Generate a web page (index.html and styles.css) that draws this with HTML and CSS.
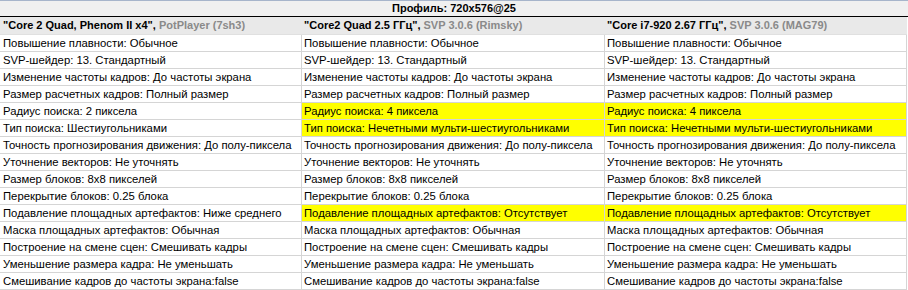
FILE: index.html
```html
<!DOCTYPE html>
<html lang="ru">
<head>
<meta charset="utf-8">
<title>Профиль</title>
<link rel="stylesheet" href="styles.css">
</head>
<body>
<div class="sheet">
  <div class="title">Профиль: 720x576@25</div>
  <div class="grid">
    <div class="hd">"Core 2 Quad, Phenom II x4", <span class="sub">PotPlayer (7sh3)</span></div>
    <div class="hd">"Core2 Quad 2.5 ГГц", <span class="sub">SVP 3.0.6 (Rimsky)</span></div>
    <div class="hd">"Core i7-920 2.67 ГГц", <span class="sub">SVP 3.0.6 (MAG79)</span></div>

    <div class="c">Повышение плавности: Обычное</div>
    <div class="c">Повышение плавности: Обычное</div>
    <div class="c">Повышение плавности: Обычное</div>

    <div class="c">SVP-шейдер: 13. Стандартный</div>
    <div class="c">SVP-шейдер: 13. Стандартный</div>
    <div class="c">SVP-шейдер: 13. Стандартный</div>

    <div class="c">Изменение частоты кадров: До частоты экрана</div>
    <div class="c">Изменение частоты кадров: До частоты экрана</div>
    <div class="c">Изменение частоты кадров: До частоты экрана</div>

    <div class="c">Размер расчетных кадров: Полный размер</div>
    <div class="c">Размер расчетных кадров: Полный размер</div>
    <div class="c">Размер расчетных кадров: Полный размер</div>

    <div class="c">Радиус поиска: 2 пиксела</div>
    <div class="c hl">Радиус поиска: 4 пиксела</div>
    <div class="c hl">Радиус поиска: 4 пиксела</div>

    <div class="c">Тип поиска: Шестиугольниками</div>
    <div class="c hl">Тип поиска: Нечетными мульти-шестиугольниками</div>
    <div class="c hl">Тип поиска: Нечетными мульти-шестиугольниками</div>

    <div class="c">Точность прогнозирования движения: До полу-пиксела</div>
    <div class="c">Точность прогнозирования движения: До полу-пиксела</div>
    <div class="c">Точность прогнозирования движения: До полу-пиксела</div>

    <div class="c">Уточнение векторов: Не уточнять</div>
    <div class="c">Уточнение векторов: Не уточнять</div>
    <div class="c">Уточнение векторов: Не уточнять</div>

    <div class="c">Размер блоков: 8x8 пикселей</div>
    <div class="c">Размер блоков: 8x8 пикселей</div>
    <div class="c">Размер блоков: 8x8 пикселей</div>

    <div class="c">Перекрытие блоков: 0.25 блока</div>
    <div class="c">Перекрытие блоков: 0.25 блока</div>
    <div class="c">Перекрытие блоков: 0.25 блока</div>

    <div class="c">Подавление площадных артефактов: Ниже среднего</div>
    <div class="c hl">Подавление площадных артефактов: Отсутствует</div>
    <div class="c hl">Подавление площадных артефактов: Отсутствует</div>

    <div class="c">Маска площадных артефактов: Обычная</div>
    <div class="c">Маска площадных артефактов: Обычная</div>
    <div class="c">Маска площадных артефактов: Обычная</div>

    <div class="c">Построение на смене сцен: Смешивать кадры</div>
    <div class="c">Построение на смене сцен: Смешивать кадры</div>
    <div class="c">Построение на смене сцен: Смешивать кадры</div>

    <div class="c">Уменьшение размера кадра: Не уменьшать</div>
    <div class="c">Уменьшение размера кадра: Не уменьшать</div>
    <div class="c">Уменьшение размера кадра: Не уменьшать</div>

    <div class="c">Смешивание кадров до частоты экрана:false</div>
    <div class="c">Смешивание кадров до частоты экрана:false</div>
    <div class="c">Смешивание кадров до частоты экрана:false</div>
  </div>
</div>
</body>
</html>
```
FILE: styles.css
```css
* { box-sizing: border-box; }
html, body { margin: 0; padding: 0; background: #ffffff; }
body {
  font-family: "Liberation Sans", Arial, sans-serif;
  font-size: 11px;
  color: #000000;
}
.sheet {
  width: 908px;
  border-top: 1px solid #a7b5cb;
}
.title {
  height: 16px;
  line-height: 15px;
  background: #f0f0f0;
  border-bottom: 1px solid #000000;
  text-align: center;
  font-weight: bold;
  font-size: 11px;
}
.grid {
  display: grid;
  grid-template-columns: 302px 303px 302px;
}
.hd {
  height: 18px;
  line-height: 17px;
  padding-left: 2px;
  background: #e9e9e9;
  border-bottom: 1px solid #e0e0e0;
  font-weight: bold;
  white-space: nowrap;
  overflow: hidden;
}
.hd:first-child { padding-left: 3px; }
.sub { color: #8a8a8a; }
.c {
  height: 17px;
  line-height: 16px;
  padding-left: 2px;
  font-size: 11.3px;
  border-right: 1px solid #d5d5d5;
  border-bottom: 1px solid #d5d5d5;
  white-space: nowrap;
  overflow: hidden;
}
.c:nth-child(3n+1) { padding-left: 3px; }
.hl { background: #ffff00; }
```
